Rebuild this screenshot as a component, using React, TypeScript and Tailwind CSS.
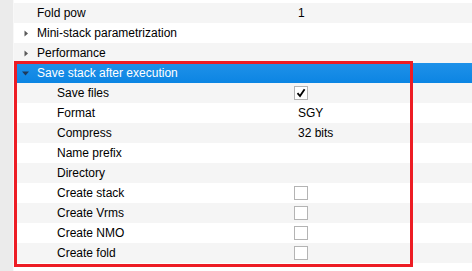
import React from 'react';

type Row = {
  label: string;
  level: 0 | 1;
  value?: string;
  check?: boolean;
  expander?: 'closed' | 'open';
};

const rows: Row[] = [
  { label: 'Fold pow', level: 0, value: '1' },
  { label: 'Mini-stack parametrization', level: 0, expander: 'closed' },
  { label: 'Performance', level: 0, expander: 'closed' },
  { label: 'Save stack after execution', level: 0, expander: 'open' },
  { label: 'Save files', level: 1, check: true },
  { label: 'Format', level: 1, value: 'SGY' },
  { label: 'Compress', level: 1, value: '32 bits' },
  { label: 'Name prefix', level: 1, value: '' },
  { label: 'Directory', level: 1, value: '' },
  { label: 'Create stack', level: 1, check: false },
  { label: 'Create Vrms', level: 1, check: false },
  { label: 'Create NMO', level: 1, check: false },
  { label: 'Create fold', level: 1, check: false },
];

const CheckBox = ({ checked }: { checked: boolean }) => (
  <div className="w-[14px] h-[14px] border border-[#b4b4b4] bg-white flex items-center justify-center">
    {checked && (
      <svg width="10" height="10" viewBox="0 0 10 10">
        <path d="M1.5 5.2 L4 8 L8.6 1.2" fill="none" stroke="#000" strokeWidth="1.8" />
      </svg>
    )}
  </div>
);

const PropertyRow = ({ row, index }: { row: Row; index: number }) => {
  const selected = row.expander === 'open';
  const bg = selected
    ? 'bg-gradient-to-b from-[#1e91e9] to-[#0b85e3] text-white'
    : index % 2 === 0
    ? 'bg-[#f5f5f5] text-black'
    : 'bg-white text-black';

  return (
    <div className={`flex h-[20px] items-center ${bg}`}>
      <div className="w-[23px] h-full flex items-center justify-center pl-[2px]">
        {row.expander === 'closed' && (
          <svg width="5" height="7" viewBox="0 0 5 7">
            <path d="M0.5 0.5 L4 3.5 L0.5 6.5 Z" fill="#5a5a5a" />
          </svg>
        )}
        {row.expander === 'open' && (
          <svg width="7" height="5" viewBox="0 0 7 5" className="-ml-[3px]">
            <path d="M0 0.5 L7 0.5 L3.5 4.5 Z" fill="#1f3b5c" />
          </svg>
        )}
      </div>
      <div className={`w-[257px] truncate pt-[1px] ${row.level === 1 ? 'pl-[20px]' : ''}`}>{row.label}</div>
      <div className="flex-1 flex items-center">
        {row.check !== undefined ? (
          <CheckBox checked={row.check} />
        ) : (
          <span className="pl-[4px] pt-[1px]">{row.value}</span>
        )}
      </div>
    </div>
  );
};

export default function App() {
  return (
    <div
      className="relative w-[472px] h-[271px] overflow-hidden bg-white text-[12px] leading-[19px] flex"
      style={{ fontFamily: '"Liberation Sans", Arial, sans-serif' }}
    >
      {/* left gutter */}
      <div className="w-[14px] shrink-0 h-full bg-[#ebebeb] border-r border-[#f8f8f8]" />

      <div className="flex-1 flex flex-col">
        <div className="h-[3px] bg-white" />
        {rows.map((row, i) => (
          <PropertyRow key={i} row={row} index={i} />
        ))}
      </div>

      {/* highlight annotation */}
      <div className="absolute left-[14px] top-[61px] w-[399px] h-[206px] border-[3px] border-[#ed1c24] pointer-events-none" />
    </div>
  );
}
